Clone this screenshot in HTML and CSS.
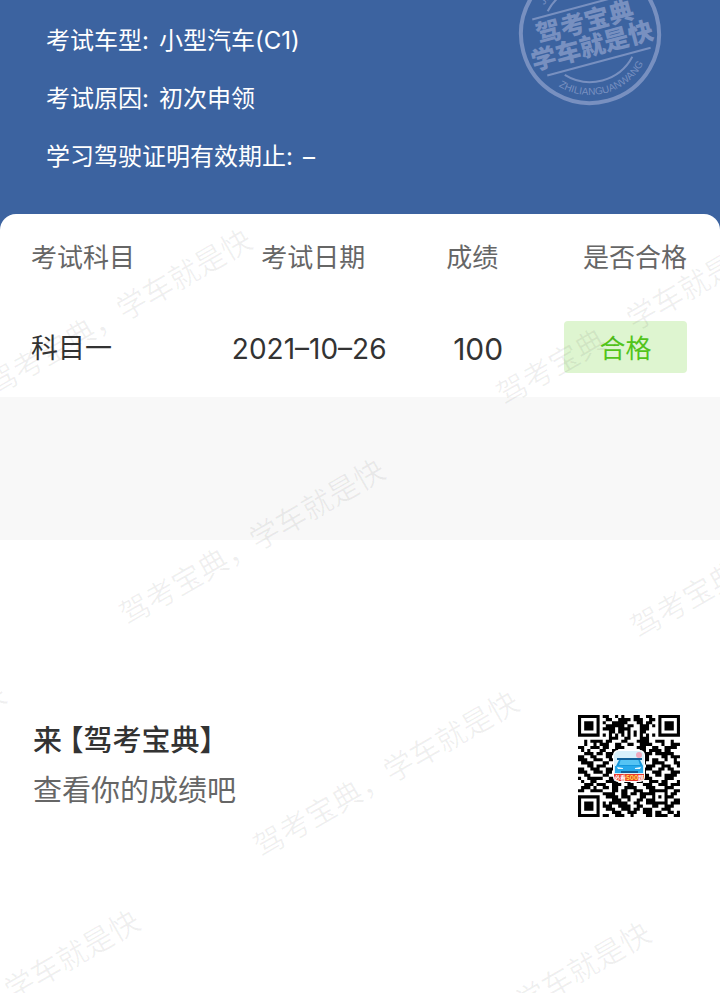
FILE: index.html
```html
<!DOCTYPE html>
<html lang="zh-CN">
<head>
  <meta charset="UTF-8">
  <meta name="viewport" content="width=device-width, initial-scale=1">
  <title>考试成绩</title>
  <link rel="stylesheet" href="styles.css">
</head>
<body>
  <div class="page">
    <header class="header">
      <dl class="info">
        <div class="info-row"><dt>考试车型:</dt><dd>小型汽车(C1)</dd></div>
        <div class="info-row"><dt>考试原因:</dt><dd>初次申领</dd></div>
        <div class="info-row"><dt>学习驾驶证明有效期止:</dt><dd>–</dd></div>
      </dl>
      <svg class="stamp" viewBox="-72 -72 144 144" aria-hidden="true">
        <defs>
          <path id="arcTop" d="M-54 0A54 54 0 0 1 54 0"/>
          <path id="arcBottom" d="M-61 0A61 61 0 0 0 61 0"/>
        </defs>
        <g transform="rotate(-15)">
          <circle r="69" fill="none" stroke="currentColor" stroke-width="4"/>
          <path d="M-52 -29H52M-52 29H55" stroke="currentColor" stroke-width="2"/>
          <path d="M-35 33A48 48 0 0 0 35 33M-35 -33A48 48 0 0 1 35 -33" fill="none" stroke="currentColor" stroke-width="2"/>
          <text class="stamp-name" x="-2" y="-4">驾考宝典</text>
          <text class="stamp-name" x="-1" y="21">学车就是快</text>
          <text class="stamp-ring"><textPath href="#arcTop" startOffset="50%">JIAKAOBAODIAN</textPath></text>
          <text class="stamp-ring"><textPath href="#arcBottom" startOffset="50%">ZHILIANGUANWANG</textPath></text>
        </g>
      </svg>
    </header>

    <main class="card">
      <table class="scores">
        <thead>
          <tr>
            <th class="subject">考试科目</th>
            <th class="date">考试日期</th>
            <th class="score">成绩</th>
            <th class="result">是否合格</th>
          </tr>
        </thead>
        <tbody>
          <tr>
            <td class="subject">科目一</td>
            <td class="date">2021–10–26</td>
            <td class="score">100</td>
            <td class="result"><span class="badge">合格</span></td>
          </tr>
        </tbody>
      </table>
    </main>

    <div class="spacer"></div>

    <footer class="promo">
      <div>
        <p class="promo-title">来<span class="brand">【驾考宝典】</span></p>
        <p class="promo-text">查看你的成绩吧</p>
      </div>
      <svg class="qr" viewBox="0 0 102 102" role="img" aria-label="二维码">
        <path id="qrModules" transform="scale(3.09)"/>
        <rect x="35" y="35" width="32" height="32" rx="5" fill="#fff"/>
        <rect x="36" y="36" width="30" height="30" rx="5" fill="#d9f1fb"/>
        <path d="M42 43h19l4 8v7H38v-7z" fill="#1597dc"/>
        <path d="M43 44h17l2 6H41z" fill="#55c4f4"/>
        <path d="M39 43h25v2H39z" fill="#14649c"/>
        <path d="M37 51h28v7H37z" fill="#27a9eb"/>
        <path d="M39 52l6 1v1h-5zM63 52l-6 1v1h5z" fill="#e8f9ff"/>
        <path d="M43 56h17v2H43z" fill="#135d96"/>
        <circle cx="61" cy="40" r="3" fill="#f0a9bd"/>
        <path d="M36 59h30v3a4 4 0 0 1-4 4H40a4 4 0 0 1-4-4z" fill="#e83a2c"/>
        <text class="qr-label" x="51" y="65">必看<tspan fill="#ffe14a">500</tspan>题</text>
      </svg>
    </footer>

    <svg class="watermark" aria-hidden="true">
      <text transform="translate(119 312) rotate(-30)">驾考宝典，学车就是快</text>
      <text transform="translate(629 322) rotate(-30)">驾考宝典，学车就是快</text>
      <text transform="translate(252 542) rotate(-30)">驾考宝典，学车就是快</text>
      <text transform="translate(763 555) rotate(-30)">驾考宝典，学车就是快</text>
      <text transform="translate(-127 766) rotate(-30)">驾考宝典，学车就是快</text>
      <text transform="translate(386 774) rotate(-30)">驾考宝典，学车就是快</text>
      <text transform="translate(7 993) rotate(-30)">驾考宝典，学车就是快</text>
      <text transform="translate(518 1005) rotate(-30)">驾考宝典，学车就是快</text>
    </svg>
  </div>
  <script src="qr.js"></script>
</body>
</html>
```
FILE: styles.css
```css
* {
  box-sizing: border-box;
}
body {
  margin: 0;
  background: #fff;
  color: #333;
  font-family: Inter, "Noto Sans CJK SC", sans-serif;
}
.page {
  position: relative;
  min-height: 100vh;
  overflow: hidden;
}

/* header */
.header {
  position: relative;
  overflow: hidden;
  padding: 12px 46px 44px;
  background: #3c63a0;
  color: #fff;
}
.info {
  margin: 0;
}
.info-row {
  display: flex;
  gap: 10px;
  height: 58px;
  font-size: 24px;
  line-height: 58px;
}
.info-row dd {
  margin: 0;
}
.stamp {
  position: absolute;
  top: -38px;
  right: 58px;
  width: 144px;
  height: 144px;
  color: #7890c0;
  fill: currentColor;
}
.stamp-name {
  font-size: 25px;
  font-weight: 900;
  text-anchor: middle;
}
.stamp-ring {
  font-family: "Liberation Sans", sans-serif;
  font-size: 10px;
  text-anchor: middle;
}

/* scores */
.card {
  position: relative;
  margin-top: -16px;
  padding: 14px 0 20px;
  background: #fff;
  border-radius: 16px 16px 0 0;
}
.scores {
  width: 100%;
  table-layout: fixed;
  border-collapse: collapse;
}
.scores th {
  height: 54px;
  padding: 0;
  color: #666;
  font-size: 26px;
  font-weight: 400;
}
.scores td {
  padding: 39px 0 0;
  font-size: 27px;
  line-height: 56px;
  text-align: center;
  vertical-align: top;
}
.scores .subject {
  width: 28%;
  padding-left: 31px;
  text-align: left;
}
.scores .date {
  width: 31%;
}
.scores td.date {
  padding-right: 8px;
  font-size: 28px;
}
.scores .score {
  width: 14%;
}
.scores th.score {
  padding-right: 6px;
}
.scores td.score {
  padding-left: 6px;
  font-size: 30px;
}
.scores .result {
  padding-right: 33px;
  text-align: right;
}
.badge {
  display: block;
  width: 123px;
  height: 52px;
  margin-left: auto;
  background: #def5d0;
  border-radius: 4px;
  color: #52c41a;
  font-size: 26px;
  text-align: center;
}
.spacer {
  height: 143px;
  background: #f8f8f8;
}

/* promo */
.promo {
  display: flex;
  justify-content: space-between;
  align-items: center;
  padding: 175px 40px 175px 33px;
}
.promo p {
  margin: 0;
  font-size: 29px;
  line-height: 50px;
}
.promo-title {
  font-weight: 500;
}
.brand {
  margin-left: 7px;
  font-feature-settings: "halt";
}
.promo .promo-text {
  color: #666;
}
.qr {
  width: 102px;
  height: 102px;
}
.qr-label {
  fill: #fff;
  font-size: 6px;
  font-weight: 700;
  text-anchor: middle;
}

.watermark {
  position: absolute;
  top: 0;
  left: 0;
  width: 100%;
  height: 100%;
  overflow: hidden;
  pointer-events: none;
  fill: rgba(0, 0, 0, 0.06);
  font-size: 30px;
  text-anchor: middle;
  dominant-baseline: central;
}
```
FILE: qr.js
```js
const rows = [
  '111111101100101000110011001111111',
  '100000100110011110111001101000001',
  '101110101001111100011011001011101',
  '101110100111111011001110101011101',
  '101110101111011110001110001011101',
  '100000100011011010101100001000001',
  '111111101010101010101010101111111',
  '000000000011100110001110000000000',
  '001011110110001100011110011100100',
  '001001011100110011001111000100111',
  '110011101100111000011100110011110',
  '010100011001100000001101111011000',
  '001110110111000000000111011111100',
  '110011000110000000001110000110111',
  '111001110011000000000110110010010',
  '011110001100000000001100111100011',
  '000110111001000000000011100111001',
  '110011100111000000000111001101100',
  '111001110110000000001100111000111',
  '001100001100000000000110011011110',
  '100111110011000000001111000011100',
  '010011000111100110011001110110001',
  '001110111001110011000111001110111',
  '011101001101100111100011100011100',
  '110011110001101100111001111110011',
  '000000001111001101101111100010110',
  '111111100111101110001100101011100',
  '100000100001110010011011100010011',
  '101110101011111100110011111110111',
  '101110101110011110011000110011100',
  '101110100111001110110111000111000',
  '100000100001110011100111011001101',
  '111111101100111001000011011110011'
];

let d = '';
rows.forEach((row, y) => {
  for (let x = 0; x < row.length; x++) {
    if (row[x] === '1') {
      // merge neighbouring modules into one run
      const start = x;
      while (row[x + 1] === '1') {
        x++;
      }
      d += `M${start} ${y}h${x - start + 1}v1h-${x - start + 1}z`;
    }
  }
});
document.getElementById('qrModules').setAttribute('d', d);
```
